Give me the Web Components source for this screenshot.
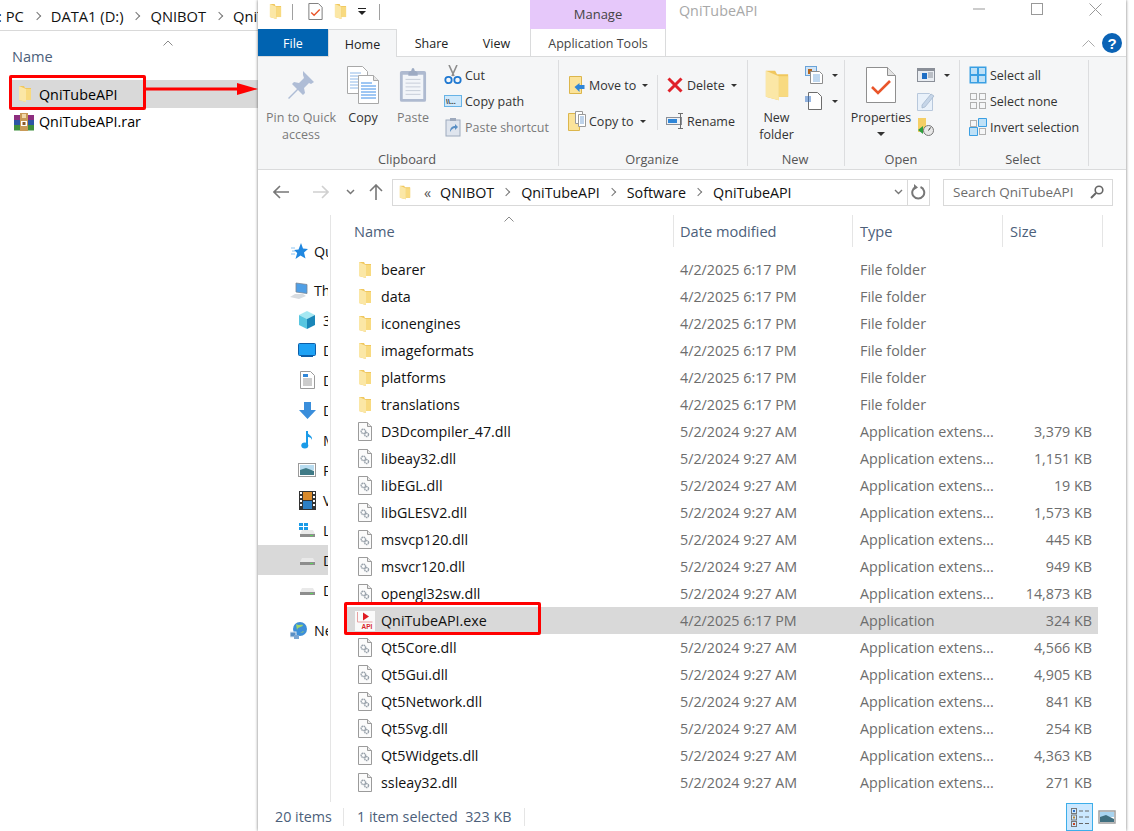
<!DOCTYPE html>
<html>
<head>
<meta charset="utf-8">
<title>QniTubeAPI</title>
<style>
  html, body { margin: 0; padding: 0; background: #fff; }
  body { width: 1134px; height: 831px; overflow: hidden; position: relative;
         font-family: "Open Sans", "Noto Sans", sans-serif; font-size: 14.3px; color: #000; }
</style>
</head>
<body>
<back-window>
  <crumb-bar slot="bar">
    <span>: PC</span><i></i><span>DATA1 (D:)</span><i></i><span>QNIBOT</span><i></i><span>QniTubeAPI</span>
  </crumb-bar>
  <back-row icon="folder" selected>QniTubeAPI</back-row>
  <back-row icon="rar">QniTubeAPI.rar</back-row>
</back-window>

<explorer-window>
  <title-bar></title-bar>
  <ribbon-tabs></ribbon-tabs>
  <ribbon-bar>
    <rb-group label="Clipboard" w="301" pad="9">
      <rb-big icon="pin" w="68" muted>Pin to Quick<br>access</rb-big>
      <rb-big icon="copy" w="56">Copy</rb-big>
      <rb-big icon="paste" w="44" muted>Paste</rb-big>
      <rb-col top="5" rows="26" style="margin-left:9px">
        <rb-small icon="cut">Cut</rb-small>
        <rb-small icon="copypath">Copy path</rb-small>
        <rb-small icon="shortcut" muted>Paste shortcut</rb-small>
      </rb-col>
    </rb-group>
    <rb-group label="Organize" w="189" pad="9">
      <rb-col top="10" rows="36" style="width:89px">
        <rb-small icon="moveto" drop>Move to</rb-small>
        <rb-small icon="copyto" drop>Copy to</rb-small>
      </rb-col>
      <rb-col top="0" rows="36" style="border-left:1px solid #dcdddf;height:55px;margin-top:18px;padding-left:8px">
        <rb-small icon="delete" drop style="margin-top:-8px">Delete</rb-small>
        <rb-small icon="rename">Rename</rb-small>
      </rb-col>
    </rb-group>
    <rb-group label="New" w="97" pad="0">
      <rb-big icon="bigfolder" w="57">New<br>folder</rb-big>
      <rb-col top="5" rows="26">
        <rb-small icon="newitem" drop></rb-small>
        <rb-small icon="easy" drop></rb-small>
      </rb-col>
    </rb-group>
    <rb-group label="Open" w="115" pad="0">
      <rb-big icon="props" w="72" drop>Properties</rb-big>
      <rb-col top="5" rows="26">
        <rb-small icon="open" drop></rb-small>
        <rb-small icon="edit" muted></rb-small>
        <rb-small icon="history"></rb-small>
      </rb-col>
    </rb-group>
    <rb-group label="Select" w="129" pad="9">
      <rb-col top="5" rows="26">
        <rb-small icon="selall">Select all</rb-small>
        <rb-small icon="selnone">Select none</rb-small>
        <rb-small icon="selinv">Invert selection</rb-small>
      </rb-col>
    </rb-group>
  </ribbon-bar>
  <address-row></address-row>
  <main-area>
    <nav-pane slot="nav">
      <nav-item icon="star" style="margin-top:21px">Qu</nav-item>
      <nav-item icon="pc" style="margin-top:9px">Th</nav-item>
      <nav-item icon="cube" sub>3</nav-item>
      <nav-item icon="desktop" sub>D</nav-item>
      <nav-item icon="docs" sub>D</nav-item>
      <nav-item icon="down" sub>D</nav-item>
      <nav-item icon="music" sub>M</nav-item>
      <nav-item icon="pics" sub>P</nav-item>
      <nav-item icon="film" sub>V</nav-item>
      <nav-item icon="winhdd" sub>L</nav-item>
      <nav-item icon="hdd" sub selected>D</nav-item>
      <nav-item icon="hdd" sub>D</nav-item>
      <nav-item icon="net" style="margin-top:10px">Ne</nav-item>
    </nav-pane>
    <file-list></file-list>
  </main-area>
  <status-bar></status-bar>
</explorer-window>

<red-mark style="left:9px;top:75px;width:137px;height:35px"></red-mark>
<red-arrow></red-arrow>
<red-mark style="left:344px;top:602px;width:197px;height:33px"></red-mark>

<script>
// little svg helper, every icon lives in this table
const svg = (w, h, vb, body) => `<svg width="${w}" height="${h}" viewBox="${vb}" style="display:block;flex:none">${body}</svg>`;
const folderBody = `<path d="M1 1h5l1 2h6v12H8v2l-7-2z" fill="#f0c75e"/><path d="M1 1l7 3v13l-7-2z" fill="#fbe7a6"/><path d="M8 4h5v11H8z" fill="#f8da80"/>`;
const gear = (x, y, r) => `<circle cx="${x}" cy="${y}" r="${r}" fill="#fff" stroke="#98a1aa" stroke-width="1.500" stroke-dasharray="1.400 .5"/>`;
const dllBody = `<path d="M.5.5h9l4 4v14H.5z" fill="#fbfbfb" stroke="#9b9b9b"/><path d="M9.500.5v4h4" fill="#e8e8e8" stroke="#9b9b9b"/>${gear(5.4, 9.4, 2.2)}${gear(8.6, 12.6, 1.9)}`;
const hdd = `<path d="M2 9l2-4h11l2 4v3H2z" fill="#e9e9e9"/><path d="M2 9h15v3H2z" fill="#8d8d8d"/><path d="M12 10h3v1h-3z" fill="#5fd35f"/>`;
const ICONS = {
  folder: svg(14, 18, '0 0 14 18', folderBody),
  bigfolder: svg(26, 37, '0 0 14 18', folderBody),
  dll: svg(14, 19, '0 0 14 19', dllBody),
  exe: svg(20, 20, '0 0 20 20', `<rect width="20" height="20" fill="#fafafa"/><path d="M2.500 1v10h15" fill="none" stroke="#e8a0a0"/><path d="M8 1.500l6 4-6 4z" fill="#e01b22"/><text x="12" y="18" text-anchor="middle" font-family="Liberation Sans" font-size="6.500" font-weight="700" fill="#d8262c">API</text>`),
  rar: svg(20, 18, '0 0 20 18', `<rect y="2" width="20" height="5" fill="#8d2e7f"/><rect y="7" width="20" height="5" fill="#2d55a5"/><rect y="12" width="20" height="5.500" fill="#3f8f3c"/><rect x="6" width="8" height="18" fill="#c99a58"/><rect x="8" y="1" width="4" height="4" fill="#f1d9a8"/><rect x="7" y="8" width="6" height="5" fill="#fff"/><rect x="8.500" y="9" width="3" height="3" fill="#8a5a2a"/>`),
  pin: svg(28, 30, '0 0 28 30', `<path d="M16 1l11 11-3 2-2-1-5 5 1 5-2 2-5-5-9 9-1-1 9-9-5-5 2-2 5 1 5-5-1-3z" fill="#afbdd6"/>`),
  copy: svg(32, 38, '0 0 32 38', `<path d="M.5.5h15l5 5v22H.5z" fill="#fff" stroke="#a8a8a8"/><path d="M3 7h11M3 10h14M3 13h14M3 16h14M3 19h14M3 22h14" stroke="#8fb8e8"/><path d="M11.500 9.500h15l5 5v23h-20z" fill="#fff" stroke="#a8a8a8"/><path d="M26.500 9.500v5h5" fill="#e6e6e6" stroke="#a8a8a8"/><path d="M14 17h11M14 20h15M14 23h15M14 26h15M14 29h15M14 32h15" stroke="#3e8ee8"/>`),
  paste: svg(28, 38, '0 0 30 38', `<rect x="1" y="4" width="28" height="33" rx="2" fill="#aebad0"/><rect x="4" y="8" width="22" height="26" fill="#f2f5f9"/><path d="M7 13h16M7 17h16M7 21h16M7 25h16M7 29h16" stroke="#c4cad6"/><path d="M10 6l2-2h1l1-3h2l1 3h1l2 2v3H10z" fill="#9dabc3"/>`),
  cut: svg(18, 20, '0 0 18 20', `<path d="M5 0l5 11M13 0L8 11" stroke="#8d8d8d" stroke-width="1.600" fill="none"/><circle cx="4.500" cy="15" r="3.200" fill="none" stroke="#1f78d1" stroke-width="1.800"/><circle cx="13.500" cy="15" r="3.200" fill="none" stroke="#1f78d1" stroke-width="1.800"/>`),
  copypath: svg(18, 12, '0 0 18 12', `<rect x=".5" y=".5" width="17" height="11" fill="#cfe8fa" stroke="#67b3e6"/><text x="2" y="9" font-family="Liberation Sans" font-size="7" font-weight="700" fill="#333">\\\\...</text>`),
  shortcut: svg(16, 20, '0 0 16 20', `<rect x="1" y="3" width="14" height="16" fill="#dfe5ee" stroke="#9eaabd"/><path d="M5 1h6v3H5z" fill="#9eaabd"/><path d="M5 15c0-4 2-6 5-6V7l3 3-3 3v-2c-2 0-3 1-5 4z" fill="#5a8fc4"/>`),
  moveto: svg(16, 18, '0 0 16 18', `<path d="M.5.5h12v17H.5z" fill="#fbe39a" stroke="#dcb64c"/><path d="M15.500 9v4h-5v3l-5-5 5-4v2z" fill="#2f86d8"/>`),
  copyto: svg(18, 20, '0 0 18 20', `<path d="M.5 2.500h11v17H.5z" fill="#fbe39a" stroke="#dcb64c"/><path d="M7.500.5h7v12h-7z" fill="#fff" stroke="#9a9a9a"/><path d="M10.500 3.500h7v12h-7z" fill="#fff" stroke="#9a9a9a"/><path d="M12 6h4M12 8h4M12 10h4M12 12h4" stroke="#7fa8d8"/>`),
  delete: svg(16, 16, '0 0 16 16', `<path d="M1.500 1.500l13 13M14.500 1.500l-13 13" stroke="#e0222a" stroke-width="3"/>`),
  rename: svg(18, 16, '0 0 18 16', `<rect x=".5" y="4.500" width="15" height="7" fill="#eef1f5" stroke="#8a8f98"/><rect x="2" y="6" width="9" height="4" fill="#2f86d8"/><path d="M12 .5h5M14.500.5v15M12 15.500h5" stroke="#6d6d6d" fill="none"/>`),
  newitem: svg(18, 18, '0 0 18 18', `<rect x=".5" y=".5" width="11" height="9" fill="#cfe4f7" stroke="#6aa3d8"/><rect x="3" y="3" width="4" height="5" fill="#b5651d"/><path d="M5.500 5.500h9l3 3v9h-12z" fill="#fff" stroke="#8d8d8d"/><path d="M8 9h7M8 11h7M8 13h7M8 15h7" stroke="#7fb0e0"/>`),
  easy: svg(18, 18, '0 0 18 18', `<path d="M3.500.5h9l4 4v13h-13z" fill="#fff" stroke="#6d6d6d"/><path d="M0 5h6M0 7h6M0 9h6" stroke="#2f6fc4"/>`),
  props: svg(30, 36, '0 0 30 36', `<path d="M.5.5h21l8 8v27H.5z" fill="#fff" stroke="#8f8f8f"/><path d="M21.500.5v8h8" fill="#e3e3e3" stroke="#8f8f8f"/><path d="M6 20l6 6L24 14" fill="none" stroke="#e9552a" stroke-width="2.600"/>`),
  open: svg(18, 14, '0 0 18 14', `<rect x=".5" y=".5" width="17" height="13" fill="#e9edf2" stroke="#8a8f98"/><path d="M1 1h16v2H1z" fill="#8a8f98"/><rect x="5" y="5" width="5" height="6" fill="#1f6fc4"/><path d="M11 5h5M11 7h5M11 9h5" stroke="#8a8f98"/>`),
  edit: svg(18, 19, '0 0 18 19', `<path d="M.5 1.500h12l3 3v14H.5z" fill="#e9f1fa" stroke="#b8c8dc"/><path d="M5 13l9-11 3 2-9 11-3 1z" fill="#c5d5e8" stroke="#9fb2c9" stroke-width=".7"/>`),
  history: svg(18, 20, '0 0 18 20', `<path d="M1 1h8v14H1z" fill="#f5cf66"/><circle cx="11.500" cy="13.500" r="5" fill="#e8e8e8" stroke="#777"/><path d="M11.500 13.500l2-3" stroke="#333"/><path d="M6 9v8l-5-4z" fill="#2f9e3f"/>`),
  selall: svg(18, 18, '0 0 18 18', `<rect x=".5" y=".5" width="17" height="17" fill="#3a9fe3"/><path d="M2 2h6v6H2zM10 2h6v6h-6zM2 10h6v6H2zM10 10h6v6h-6z" fill="#bfe1f7"/>`),
  selnone: svg(18, 18, '0 0 18 18', `<g fill="none" stroke="#b0b0b0"><rect x="1.500" y="1.500" width="6" height="6"/><rect x="10.500" y="1.500" width="6" height="6"/><rect x="1.500" y="10.500" width="6" height="6"/><rect x="10.500" y="10.500" width="6" height="6"/></g>`),
  selinv: svg(18, 18, '0 0 18 18', `<g fill="none" stroke="#b0b0b0"><rect x="1.500" y="2.500" width="6" height="6"/><rect x="10.500" y="10.500" width="6" height="6"/></g><path d="M9.500.5h8v8h-8zM.5 9.500h8v8h-8z" fill="#bfe1f7" stroke="#3a9fe3"/>`),
  star: svg(17, 17, '0 0 17 17', `<path d="M10 0l2 5.500 5 .5-4 3.500 1.500 6L9.500 12.500 4.500 16l1.700-6L3 7l4.500-.5z" fill="#1f87e0"/><path d="M0 5h4M1 8h3M0 11h4" stroke="#8cc4f0"/>`),
  pc: svg(18, 17, '0 0 18 17', `<path d="M6 1l11 1.500v9L6 10z" fill="#4f9fe6" stroke="#7a8794" stroke-width=".8"/><path d="M0 15l5-3h8l3 2-7 3z" fill="#d8dce0"/>`),
  cube: svg(18, 18, '0 0 18 18', `<path d="M9 0l8 4-8 4-8-4z" fill="#a5e8f2"/><path d="M1 4l8 4v10l-8-4z" fill="#58c6e0"/><path d="M17 4L9 8v10l8-4z" fill="#1a86b8"/>`),
  desktop: svg(18, 14, '0 0 18 14', `<rect x=".5" y=".5" width="17" height="12" rx="1" fill="#1ea2f5" stroke="#0d5ea8"/><rect x="3" y="13" width="12" height="1" fill="#0d5ea8"/>`),
  docs: svg(15, 18, '0 0 15 18', `<path d="M.5.5h10l4 4v13H.5z" fill="#fff" stroke="#9a9a9a"/><path d="M3 3h5v3H3z" fill="#2f86d8"/><path d="M3 8h9M3 10h9M3 12h9M3 14h9" stroke="#9a9a9a"/>`),
  down: svg(17, 17, '0 0 17 17', `<path d="M5 0h7v8h5l-8.500 9L0 8h5z" fill="#3a8edb"/>`),
  music: svg(12, 18, '0 0 12 18', `<path d="M6 0v13" stroke="#1b9be8" stroke-width="2"/><path d="M6 0c0 4 6 4 5 9-1-3-3-3-5-3z" fill="#1b9be8"/><ellipse cx="3.800" cy="14.500" rx="3.500" ry="3" fill="#1b9be8"/>`),
  pics: svg(18, 14, '0 0 18 14', `<rect x=".5" y=".5" width="17" height="13" fill="#fff" stroke="#9a9a9a"/><path d="M2 2h14v5H2z" fill="#b8dcf0"/><path d="M2 7l6-2 8 3v4H2z" fill="#3f7a86"/>`),
  film: svg(17, 19, '0 0 17 19', `<rect width="17" height="19" fill="#333"/><path d="M1 1h2v2H1zM1 5h2v2H1zM1 9h2v2H1zM1 13h2v2H1zM14 1h2v2h-2zM14 5h2v2h-2zM14 9h2v2h-2zM14 13h2v2h-2z" fill="#fff"/><rect x="4" y="1" width="9" height="8" fill="#d98a2b"/><rect x="4" y="10" width="9" height="8" fill="#2d7fc4"/>`),
  hdd: svg(19, 15, '0 0 19 15', hdd),
  winhdd: svg(19, 17, '0 0 19 17', `<path d="M1 1h4v3H1zM6 1h4v3H6zM1 5h4v3H1zM6 5h4v3H6z" fill="#1a9be8"/><g transform="translate(0 3)">${hdd}</g>`),
  net: svg(19, 18, '0 0 19 18', `<circle cx="10" cy="8" r="7" fill="#3d8fd8"/><path d="M6 3c3 2 6 0 7 1-1 3-5 1-6 5zM10 12c2-1 3-2 4-1" fill="#9ed56a"/><rect y="11" width="6" height="5" fill="#5a8fc4" stroke="#dfe8f2"/><rect x="4" y="14" width="5" height="4" fill="#7aa5d2"/>`),
  detail: svg(20, 20, '0 0 20 20', `<g fill="none" stroke="#777"><rect x="1.500" y="1.500" width="5" height="5"/><rect x="1.500" y="8" width="5" height="5"/><rect x="1.500" y="14.500" width="5" height="5"/></g><path d="M3 3h2v2H3z" fill="#2f6fc4"/><path d="M3 9.500h2v2H3z" fill="#b8863a"/><path d="M3 16h2v2H3z" fill="#c9431d"/><path d="M9 4h4M15 4h4M9 10h4M15 10h4M9 16.500h4M15 16.500h4" stroke="#666"/>`),
  thumb: svg(18, 14, '0 0 18 14', `<rect x="1" y="1" width="16" height="12" fill="#fff" stroke="#a0a0a0" stroke-width="1.500"/><path d="M2 2h14v5H2z" fill="#a8d4f0"/><path d="M2 7l6-2 8 4v3H2z" fill="#3f6f80"/>`)
};

class BaseEl extends HTMLElement {
  constructor() {
    super();
    this.attachShadow({mode: 'open'});
  }
  connectedCallback() { this.shadowRoot.innerHTML = this.render(); }
}
const def = (name, css, html) => customElements.define(name, class extends BaseEl {
  render() { return `<style>${css}</style>${html(this)}`; }
});
const attr = (el, n, d = '') => el.hasAttribute(n) ? el.getAttribute(n) : d;

// back window, the one behind
def('back-window', `
  :host{display:block;height:831px;width:258px}
  .head{position:relative;color:#4c607a;font-size:14.600px;padding:15px 0 0 12px;box-sizing:border-box;height:49px}
  .up{position:absolute;left:163px;top:9px}
`, () => `<slot name="bar"></slot>
  <div class="head">Name<svg class="up" width="10" height="6" viewBox="0 0 10 6"><path d="M.5 5.500L5 1l4.500 4.500" fill="none" stroke="#8a8a8a"/></svg></div>
  <slot></slot>`);
def('crumb-bar', `
  :host{display:flex;align-items:center;height:31px;border-bottom:1px solid #d9d9d9;box-sizing:border-box;width:400px;color:#111;white-space:nowrap;padding-top:1px;font-size:14.700px;margin-left:-2px}
  ::slotted(i){width:6px;height:6px;border-top:1.500px solid #777;border-right:1.500px solid #777;box-sizing:border-box;transform:rotate(45deg);margin:0 11px 0 10px;flex:none}
`, () => `<slot></slot>`);
def('back-row', `
  :host{display:flex;align-items:center;height:27px;padding-left:16px;gap:6px}
  :host([selected]){background:#d9d9d9;height:28px;margin-left:10px;padding-left:6px}
  .ic{width:17px;display:flex;justify-content:center;flex:none}
  :host([icon=rar]){padding-left:14px;gap:5px}
  :host([icon=rar]) .ic{width:20px}
`, el => `<span class="ic">${ICONS[attr(el, 'icon')]}</span><slot></slot>`);

// explorer window in front
def('explorer-window', `
  :host{position:absolute;left:258px;top:0;width:868px;height:831px;background:#fff;display:flex;flex-direction:column;
    box-shadow:0 0 3px rgba(0,0,0,.55);overflow:hidden}
`, () => `<slot></slot>`);

def('title-bar', `
  :host{display:flex;align-items:center;height:29px;flex:none;position:relative;color:#000}
  .qat{display:flex;align-items:center;width:272px;padding-left:11px;box-sizing:border-box;height:20px;margin-top:-6px}
  .sep{width:1px;height:16px;background:#a0a0a0}
  .manage{width:136px;height:29px;padding-bottom:2px;box-sizing:border-box;background:#e6c8fa;color:#444;font-size:13px;display:flex;align-items:center;justify-content:center;flex:none}
  .ttl{margin-left:13px;color:#a8a8a8;flex:1;margin-top:-8px}
  .ctl{display:flex;margin-right:2px;margin-top:-10px}
  .ctl span{width:58px;display:flex;justify-content:center}
`, () => `<div class="qat">
    ${svg(13, 17, '0 0 14 18', folderBody)}
    <span class="sep" style="margin-left:10px"></span>
    <span style="margin-left:15px">${svg(15, 17, '0 0 30 36', `<path d="M1 1h20l8 8v26H1z" fill="#fff" stroke="#777" stroke-width="2"/><path d="M6 20l6 6L24 14" fill="none" stroke="#e9552a" stroke-width="3"/>`)}</span>
    <span style="margin-left:11px">${svg(13, 17, '0 0 14 18', folderBody)}</span>
    <svg style="margin-left:11px" width="8" height="7" viewBox="0 0 8 7"><path d="M0 0h8v1H0zM0 3h8L4 7z" fill="#222"/></svg>
    <span class="sep" style="margin-left:13px"></span>
  </div>
  <div class="manage">Manage</div>
  <div class="ttl">QniTubeAPI</div>
  <div class="ctl">
    <span><svg width="12" height="12" viewBox="0 0 12 12"><path d="M0 6h12" stroke="#999"/></svg></span>
    <span><svg width="12" height="12" viewBox="0 0 12 12"><rect x=".5" y=".5" width="11" height="11" fill="none" stroke="#999"/></svg></span>
    <span><svg width="13" height="13" viewBox="0 0 13 13"><path d="M.5.5l12 12M12.500.5l-12 12" stroke="#999"/></svg></span>
  </div>`);

def('ribbon-tabs', `
  :host{display:flex;height:28px;flex:none;position:relative;font-size:12.500px;border-bottom:1px solid #dadbdc;box-sizing:border-box;align-items:stretch;color:#222}
  span{display:flex;align-items:center;justify-content:center;flex:none;padding-top:1px;box-sizing:border-box}
  .file{width:70px;background:#0063b1;color:#fff}
  .home{width:69px;background:#f5f6f7;border:1px solid #dadbdc;border-bottom:none;margin-bottom:-1px}
  .share{width:69px}
  .view{width:61px}
  .app{width:136px;margin-left:3px;border:1px solid #dadbdc;border-top:none;border-bottom:none;color:#444}
  .r{position:absolute;right:4px;top:4px;display:flex;align-items:center;gap:7px}
  .q{width:20px;height:20px;border-radius:50%;background:#0b63b5;color:#fff;font:700 15px "Liberation Sans",sans-serif;display:flex;align-items:center;justify-content:center}
`, () => `<span class="file">File</span><span class="home">Home</span>
  <span class="share">Share</span><span class="view">View</span>
  <span class="app">Application Tools</span>
  <div class="r"><svg width="13" height="8" viewBox="0 0 13 8"><path d="M.5 7.500l6-6 6 6" fill="none" stroke="#aaa"/></svg><div class="q">?</div></div>`);

def('ribbon-bar', `
  :host{display:flex;height:113px;flex:none;background:#f5f6f7;border-bottom:1px solid #dadbdc;box-sizing:border-box;font-size:12.500px;color:#333}
`, () => `<slot></slot>`);
def('rb-group', `
  :host{display:flex;flex-direction:column;box-sizing:border-box;height:112px;position:relative;flex:none}
  .body{display:flex;flex:1;min-height:0}
  .label{height:23px;text-align:center;color:#555;line-height:26px;font-size:12.800px;padding-right:3px}
  .div{position:absolute;right:0;top:3px;bottom:3px;width:1px;background:#dcdddf}
`, el => {
  el.style.width = attr(el, 'w') + 'px';
  return `<div class="body" style="padding-left:${attr(el, 'pad', 0)}px"><slot></slot></div>
  <div class="label">${attr(el, 'label')}</div><div class="div"></div>`;
});
def('rb-big', `
  :host{display:flex;flex-direction:column;align-items:center;flex:none;padding-top:9px;text-align:center;line-height:17px;box-sizing:border-box;white-space:nowrap}
  :host([muted]){color:#7a7a7a}
  .ic{height:38px;display:flex;align-items:center;justify-content:center;margin-bottom:5px}
  .drop{width:0;height:0;border:4px solid transparent;border-top-color:#333;border-bottom:0;margin-top:6px}
`, el => {
  el.style.width = attr(el, 'w') + 'px';
  return `<div class="ic">${ICONS[attr(el, 'icon')]}</div><div><slot></slot></div>${el.hasAttribute('drop') ? '<div class="drop"></div>' : ''}`;
});
def('rb-col', `
  :host{display:flex;flex-direction:column;flex:none;box-sizing:border-box}
`, el => {
  el.style.paddingTop = attr(el, 'top', 5) + 'px';
  el.style.setProperty('--row', attr(el, 'rows', 26) + 'px');
  return `<slot></slot>`;
});
def('rb-small', `
  :host{display:flex;align-items:center;height:var(--row,26px);white-space:nowrap;flex:none}
  :host([muted]){color:#7a7a7a}
  .ic{width:18px;margin-right:3px;display:flex;justify-content:center;flex:none}
  .drop{width:0;height:0;border:3.500px solid transparent;border-top-color:#333;border-bottom:0;margin-left:6px}
`, el => `<span class="ic">${ICONS[attr(el, 'icon')]}</span><slot></slot>${el.hasAttribute('drop') ? '<span class="drop"></span>' : ''}`);

def('address-row', `
  :host{display:flex;align-items:center;height:45px;flex:none;position:relative;box-sizing:border-box;padding-left:15px;padding-bottom:1px}
  .nav{display:flex;align-items:center;width:119px;flex:none}
  .box{height:27px;border:1px solid #d9d9d9;box-sizing:border-box;display:flex;align-items:center}
  .addr{width:538px;padding-left:6px;color:#111;white-space:nowrap}
  .addr i{width:6px;height:6px;border-top:1.500px solid #777;border-right:1.500px solid #777;box-sizing:border-box;transform:rotate(45deg);margin:0 12px 0 9px;flex:none}
  .chev{margin-left:auto;margin-right:4px}
  .ref{width:21px;height:25px;border-left:1px solid #d9d9d9;display:flex;align-items:center;justify-content:center}
  .search{width:170px;margin-left:13px;padding-left:9px;color:#6d6d6d;font-size:13.500px;white-space:nowrap;justify-content:space-between;padding-right:8px}
`, () => `<div class="nav">
    <svg width="16" height="14" viewBox="0 0 16 14"><path d="M1 7h15M7 1L1 7l6 6" fill="none" stroke="#777" stroke-width="1.600"/></svg>
    <svg style="margin-left:24px" width="16" height="14" viewBox="0 0 16 14"><path d="M0 7h15M9 1l6 6-6 6" fill="none" stroke="#d0d0d0" stroke-width="1.600"/></svg>
    <svg style="margin-left:17px" width="9" height="6" viewBox="0 0 9 6"><path d="M1 1l3.500 3.500L8 1" fill="none" stroke="#777" stroke-width="1.500"/></svg>
    <svg style="margin-left:14px" width="14" height="16" viewBox="0 0 14 16"><path d="M7 16V1M1 7l6-6 6 6" fill="none" stroke="#777" stroke-width="1.600"/></svg>
  </div>
  <div class="box addr">${svg(12, 17, '0 0 14 18', folderBody)}<span style="margin-left:13px;color:#555">&#171;</span><span style="margin-left:9px">QNIBOT</span><i></i><span>QniTubeAPI</span><i></i><span>Software</span><i></i><span>QniTubeAPI</span>
    <svg class="chev" width="9" height="6" viewBox="0 0 9 6"><path d="M1 1l3.500 3.500L8 1" fill="none" stroke="#777" stroke-width="1.400"/></svg>
    <div class="ref"><svg width="15" height="16" viewBox="0 0 15 16"><path d="M9.500 3a6 6 0 1 1-4.500 0" fill="none" stroke="#777" stroke-width="2"/><path d="M3 0l4 3.500-4 2.500z" fill="#777"/></svg></div></div>
  <div class="box search"><span>Search QniTubeAPI</span><svg width="14" height="14" viewBox="0 0 14 14"><circle cx="9" cy="5" r="3.800" fill="none" stroke="#666" stroke-width="1.600"/><path d="M6 8l-5 5" stroke="#666" stroke-width="2"/></svg></div>`);

def('main-area', `
  :host{display:flex;flex:1;min-height:0}
`, () => `<slot name="nav"></slot><slot></slot>`);
def('nav-pane', `
  :host{display:block;width:73px;flex:none;border-right:1px solid #e5e5e5;box-sizing:border-box;overflow:hidden;margin-bottom:1px;padding-right:2px}
`, () => `<slot></slot>`);
def('nav-item', `
  :host{display:flex;align-items:center;height:30px;white-space:nowrap;overflow:hidden;color:#111;padding-left:32px;box-sizing:border-box}
  :host([sub]){padding-left:40px}
  :host([selected]){background:#d9d9d9}
  .ic{width:18px;margin-right:6px;display:flex;justify-content:center;flex:none}
  :host([sub]) .ic{margin-right:7px}
`, el => `<span class="ic">${ICONS[attr(el, 'icon')]}</span><slot></slot>`);

const FILES = [
  ['bearer', '4/2/2025 6:17 PM', 'File folder', '', 'folder'],
  ['data', '4/2/2025 6:17 PM', 'File folder', '', 'folder'],
  ['iconengines', '4/2/2025 6:17 PM', 'File folder', '', 'folder'],
  ['imageformats', '4/2/2025 6:17 PM', 'File folder', '', 'folder'],
  ['platforms', '4/2/2025 6:17 PM', 'File folder', '', 'folder'],
  ['translations', '4/2/2025 6:17 PM', 'File folder', '', 'folder'],
  ['D3Dcompiler_47.dll', '5/2/2024 9:27 AM', 'Application extens...', '3,379 KB', 'dll'],
  ['libeay32.dll', '5/2/2024 9:27 AM', 'Application extens...', '1,151 KB', 'dll'],
  ['libEGL.dll', '5/2/2024 9:27 AM', 'Application extens...', '19 KB', 'dll'],
  ['libGLESV2.dll', '5/2/2024 9:27 AM', 'Application extens...', '1,573 KB', 'dll'],
  ['msvcp120.dll', '5/2/2024 9:27 AM', 'Application extens...', '445 KB', 'dll'],
  ['msvcr120.dll', '5/2/2024 9:27 AM', 'Application extens...', '949 KB', 'dll'],
  ['opengl32sw.dll', '5/2/2024 9:27 AM', 'Application extens...', '14,873 KB', 'dll'],
  ['QniTubeAPI.exe', '4/2/2025 6:17 PM', 'Application', '324 KB', 'exe', true],
  ['Qt5Core.dll', '5/2/2024 9:27 AM', 'Application extens...', '4,566 KB', 'dll'],
  ['Qt5Gui.dll', '5/2/2024 9:27 AM', 'Application extens...', '4,905 KB', 'dll'],
  ['Qt5Network.dll', '5/2/2024 9:27 AM', 'Application extens...', '841 KB', 'dll'],
  ['Qt5Svg.dll', '5/2/2024 9:27 AM', 'Application extens...', '254 KB', 'dll'],
  ['Qt5Widgets.dll', '5/2/2024 9:27 AM', 'Application extens...', '4,363 KB', 'dll'],
  ['ssleay32.dll', '5/2/2024 9:27 AM', 'Application extens...', '271 KB', 'dll']
];
def('file-list', `
  :host{display:block;flex:1;min-width:0;position:relative}
  .head{display:grid;grid-template-columns:343px 179px 150px 100px;height:32px;color:#4c607a;font-size:14.600px}
  .head div{border-right:1px solid #e5e5e5;box-sizing:border-box;display:flex;align-items:center;padding:0 0 0 7px}
  .head div:first-child{padding-left:23px}
  .head div:nth-child(2){padding-left:6px}
  .up{position:absolute;left:173px;top:1px}
  .rows{margin-top:9px;margin-left:13px;width:754px}
  .row{display:grid;grid-template-columns:336px 180px 142px 90px;height:27px;align-items:center;color:#6d6d6d}
  .row.sel{background:#d9d9d9}
  .name{display:flex;align-items:center;color:#111}
  .ic{width:20px;margin:0 3px 0 14px;display:flex;flex:none}
  .sel .ic{margin-left:11px;margin-right:6px}
  .size{text-align:right}
`, () => `<div class="head"><div>Name</div><div>Date modified</div><div>Type</div><div>Size</div></div>
  <svg class="up" width="10" height="6" viewBox="0 0 10 6"><path d="M.5 5.500L5 1l4.500 4.500" fill="none" stroke="#8a8a8a"/></svg>
  <div class="rows">${FILES.map(f => `<div class="row${f[5] ? ' sel' : ''}">
    <div class="name"><span class="ic">${ICONS[f[4]]}</span>${f[0]}</div><div>${f[1]}</div><div>${f[2]}</div><div class="size">${f[3]}</div></div>`).join('')}</div>`);

def('status-bar', `
  :host{display:flex;align-items:center;height:28px;flex:none;color:#4c607a;position:relative;padding-left:17px;box-sizing:border-box}
  .a{width:68px;border-right:1px solid #e5e5e5;height:18px;line-height:18px;flex:none}
  .b{width:167px;padding-left:13px;border-right:1px solid #e5e5e5;height:18px;line-height:18px;white-space:pre;flex:none}
  .v{margin-left:auto;display:flex;align-items:center;margin-right:10px;height:28px}
  .on{width:27px;height:28px;background:#cce8ff;border:1px solid #3daee9;box-sizing:border-box;display:flex;align-items:center;justify-content:center;margin-right:5px}
`, () => `<div class="a">20 items</div><div class="b">1 item selected  323 KB</div>
  <div class="v"><div class="on">${ICONS.detail}</div>${ICONS.thumb}</div>`);

// red annotations drawn over the screenshot
def('red-mark', `
  :host{position:absolute;box-sizing:border-box;border:3.500px solid #f00;border-radius:2px;display:block;z-index:5}
`, () => ``);
def('red-arrow', `
  :host{position:absolute;left:146px;top:83px;z-index:5;display:block}
`, () => `<svg width="112" height="12" viewBox="0 0 112 12" style="display:block"><path d="M0 4.500h92v3H0z" fill="#f00"/><path d="M91 0l21 6-21 6z" fill="#f00"/></svg>`);
</script>
</body>
</html>
